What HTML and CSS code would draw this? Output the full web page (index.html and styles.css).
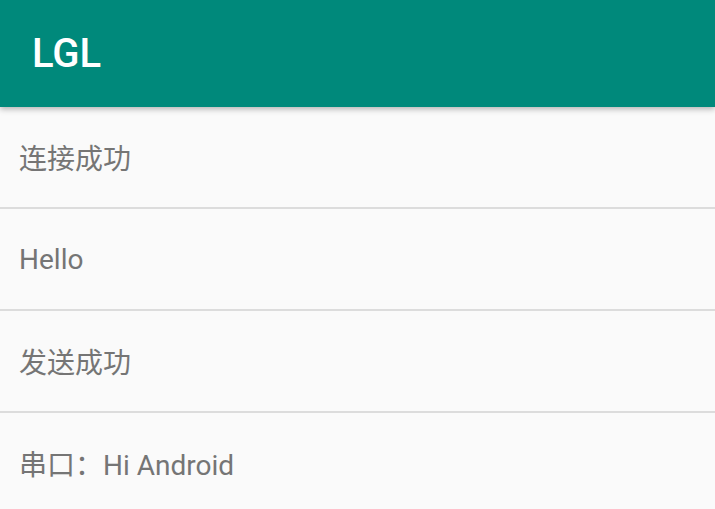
FILE: index.html
```html
<!DOCTYPE html>
<html lang="zh">
<head>
    <meta charset="UTF-8">
    <meta name="viewport" content="width=device-width, initial-scale=1.0">
    <title>LGL</title>
    <link rel="stylesheet" href="styles.css">
</head>
<body>
    <header class="toolbar">
        <h1 class="toolbar-title">LGL</h1>
    </header>
    <ul class="message-list">
        <li class="message">连接成功</li>
        <li class="message">Hello</li>
        <li class="message">发送成功</li>
        <li class="message">串口：Hi Android</li>
    </ul>
</body>
</html>
```

FILE: styles.css
```css
body {
    margin: 0;
    background-color: #fafafa;
    font-family: Roboto, "Noto Sans CJK SC", sans-serif;
    overflow: hidden;
}
.toolbar {
    position: relative;
    z-index: 1;
    height: 107px;
    background-color: #00897b;
    display: flex;
    align-items: center;
    padding-left: 32px;
    box-shadow: 0 2px 6px rgba(0, 0, 0, 0.3);
}
.toolbar-title {
    margin: 0;
    color: #fff;
    font-size: 40px;
    font-weight: 500;
}
.message-list {
    list-style: none;
    margin: 0;
    padding: 0;
}
.message {
    height: 100px;
    display: flex;
    align-items: center;
    padding-left: 19px;
    font-size: 28px;
    color: #757575;
    border-bottom: 2px solid #dcdcdc;
}
```
